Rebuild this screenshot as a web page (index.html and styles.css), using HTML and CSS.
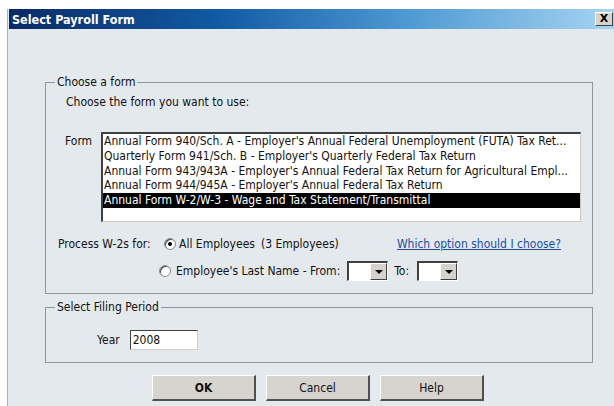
FILE: index.html
```html
<!DOCTYPE html>
<html lang="en">
<head>
<meta charset="utf-8">
<title>Select Payroll Form</title>
<link rel="stylesheet" href="styles.css">
</head>
<body>
<div class="window">
  <div class="titlebar">
    <span class="title">Select Payroll Form</span>
    <span class="close-btn">X</span>
  </div>
  <div class="client">
    <fieldset class="group group-form">
      <legend>Choose a form</legend>
      <p class="hint">Choose the form you want to use:</p>
      <div class="form-row">
        <span class="form-label">Form</span>
        <ul class="listbox">
          <li>Annual Form 940/Sch. A - Employer's Annual Federal Unemployment (FUTA) Tax Ret...</li>
          <li>Quarterly Form 941/Sch. B - Employer's Quarterly Federal Tax Return</li>
          <li>Annual Form 943/943A - Employer's Annual Federal Tax Return for Agricultural Empl...</li>
          <li>Annual Form 944/945A - Employer's Annual Federal Tax Return</li>
          <li class="selected">Annual Form W-2/W-3 - Wage and Tax Statement/Transmittal</li>
        </ul>
      </div>
      <div class="option-row">
        <span class="option-label">Process W-2s for:</span>
        <span class="radio radio-all checked"></span>
        <span>All Employees</span>
        <span class="count">(3 Employees)</span>
        <a class="help-link" href="#">Which option should I choose?</a>
      </div>
      <div class="option-row name-row">
        <span class="radio radio-name"></span>
        <span>Employee's Last Name - From:</span>
        <span class="combo"><span class="combo-field"></span><span class="combo-btn"></span></span>
        <span class="to-label">To:</span>
        <span class="combo combo-to"><span class="combo-field"></span><span class="combo-btn"></span></span>
      </div>
    </fieldset>
    <fieldset class="group group-period">
      <legend>Select Filing Period</legend>
      <div class="year-row">
        <span class="year-label">Year</span>
        <span class="textbox">2008</span>
      </div>
    </fieldset>
    <div class="buttons">
      <button class="btn btn-default">OK</button>
      <button class="btn">Cancel</button>
      <button class="btn">Help</button>
    </div>
  </div>
</div>
</body>
</html>
```

FILE: styles.css
```css
html, body {
  margin: 0;
  padding: 0;
  background: #ffffff;
  font-family: "DejaVu Sans Condensed", "DejaVu Sans", sans-serif;
  font-stretch: condensed;
  font-size: 12px;
  color: #111;
}

.window {
  margin: 9px 0 0 7px;
  height: 397px;
  border-left: 1px solid #a9b1b9;
  padding-left: 1px;
  background: #e4e9ee;
  display: flex;
  flex-direction: column;
}

/* caption bar */
.titlebar {
  height: 20px;
  display: flex;
  align-items: center;
  justify-content: space-between;
  padding: 0 1px 0 3px;
  background: linear-gradient(to right, #0a2a66 0%, #125ba5 35%, #4c98d2 65%, #a6d4f2 100%);
}

.title {
  color: #fff;
  font-weight: bold;
  font-size: 12.5px;
}

.close-btn {
  width: 16px;
  height: 12px;
  background: #d6d3ce;
  border-top: 1px solid #fff;
  border-left: 1px solid #fff;
  border-right: 1px solid #404040;
  border-bottom: 1px solid #404040;
  color: #000;
  font-family: "DejaVu Sans", sans-serif;
  font-stretch: normal;
  font-weight: bold;
  font-size: 11px;
  line-height: 12px;
  text-align: center;
}

.client {
  padding: 46px 21px 0 36px;
}

/* group boxes */
.group {
  margin: 0;
  padding: 0;
  border: 1px solid #8d979f;
  min-width: 0;
}

.group legend {
  padding: 0 2px;
  line-height: 14px;
}

.group-form {
  padding: 6px 0 12px 20px;
}

.group-form legend {
  margin-left: -11px;
}

.hint {
  margin: 0;
  line-height: 14px;
}

.form-row {
  display: flex;
  align-items: flex-start;
  margin-top: 23px;
}

.form-label {
  width: 36px;
  line-height: 14.8px;
  padding-top: 2px;
  margin-left: -1px;
}

.listbox {
  list-style: none;
  margin: 0;
  padding: 0 0 13px 0;
  width: 477px;
  height: 74px;
  background: #fff;
  border-top: 2px solid #404040;
  border-left: 2px solid #404040;
  border-right: 1px solid #c8c8c8;
  border-bottom: 1px solid #c8c8c8;
  overflow: hidden;
}

.listbox li {
  line-height: 14.8px;
  height: 14.8px;
  padding-left: 1px;
  white-space: nowrap;
  overflow: hidden;
}

.listbox li.selected {
  background: #000;
  color: #fff;
}

/* radio rows */
.option-row {
  display: flex;
  align-items: center;
  height: 18px;
  margin-top: 13px;
}

.option-label {
  margin-left: -8px;
  width: 106px;
}

.radio {
  flex: none;
  width: 10px;
  height: 10px;
  border-radius: 50%;
  background: #fff;
  border: 1px solid #8a8a8a;
  box-shadow: inset 1px 1px 0 #404040;
  margin-right: 3px;
  position: relative;
}

.radio.checked::after {
  content: "";
  position: absolute;
  left: 3px;
  top: 3px;
  width: 4px;
  height: 4px;
  border-radius: 50%;
  background: #000;
}

.count {
  margin-left: 6px;
}

.help-link {
  margin-left: auto;
  margin-right: 31px;
  color: #1d4f9e;
  text-decoration: underline;
}

.name-row {
  height: 20px;
  margin-top: 8px;
}

.radio-name {
  margin-left: 93px;
  margin-right: 5px;
}

.combo {
  display: flex;
  height: 17px;
  margin-left: 7px;
  border-top: 2px solid #404040;
  border-left: 2px solid #404040;
  border-right: 1px solid #fff;
  border-bottom: 1px solid #fff;
}

.combo-to {
  margin-left: 8px;
}

.combo-field {
  width: 21px;
  background: #fff;
}

.combo-btn {
  width: 15px;
  height: 15px;
  background: #d6d3ce;
  border-top: 1px solid #fff;
  border-left: 1px solid #fff;
  border-right: 1px solid #404040;
  border-bottom: 1px solid #404040;
  display: flex;
  align-items: center;
  justify-content: center;
}

.combo-btn::before {
  content: "";
  border-left: 4px solid transparent;
  border-right: 4px solid transparent;
  border-top: 4px solid #000;
}

.to-label {
  margin-left: 6px;
}

/* filing period */
.group-period {
  margin-top: 6px;
  padding: 16px 0 12px 51px;
}

.group-period legend {
  margin-left: -42px;
}

.year-row {
  display: flex;
  align-items: center;
}

.year-label {
  margin-right: 10px;
}

.textbox {
  width: 64px;
  height: 18px;
  line-height: 18px;
  padding-left: 2px;
  background: #fff;
  border-top: 1px solid #404040;
  border-left: 1px solid #404040;
  border-right: 1px solid #d0d0d0;
  border-bottom: 1px solid #d0d0d0;
}

/* command buttons */
.buttons {
  display: flex;
  gap: 10px;
  margin: 12px 0 0 107px;
}

.btn {
  width: 104px;
  height: 26px;
  padding: 0;
  font-family: inherit;
  font-stretch: condensed;
  font-size: 12px;
  color: #111;
  background: #d7d4cf;
  border-top: 1px solid #fff;
  border-left: 1px solid #fff;
  border-right: 2px solid #505050;
  border-bottom: 2px solid #505050;
}

.btn-default {
  font-weight: bold;
}
```
